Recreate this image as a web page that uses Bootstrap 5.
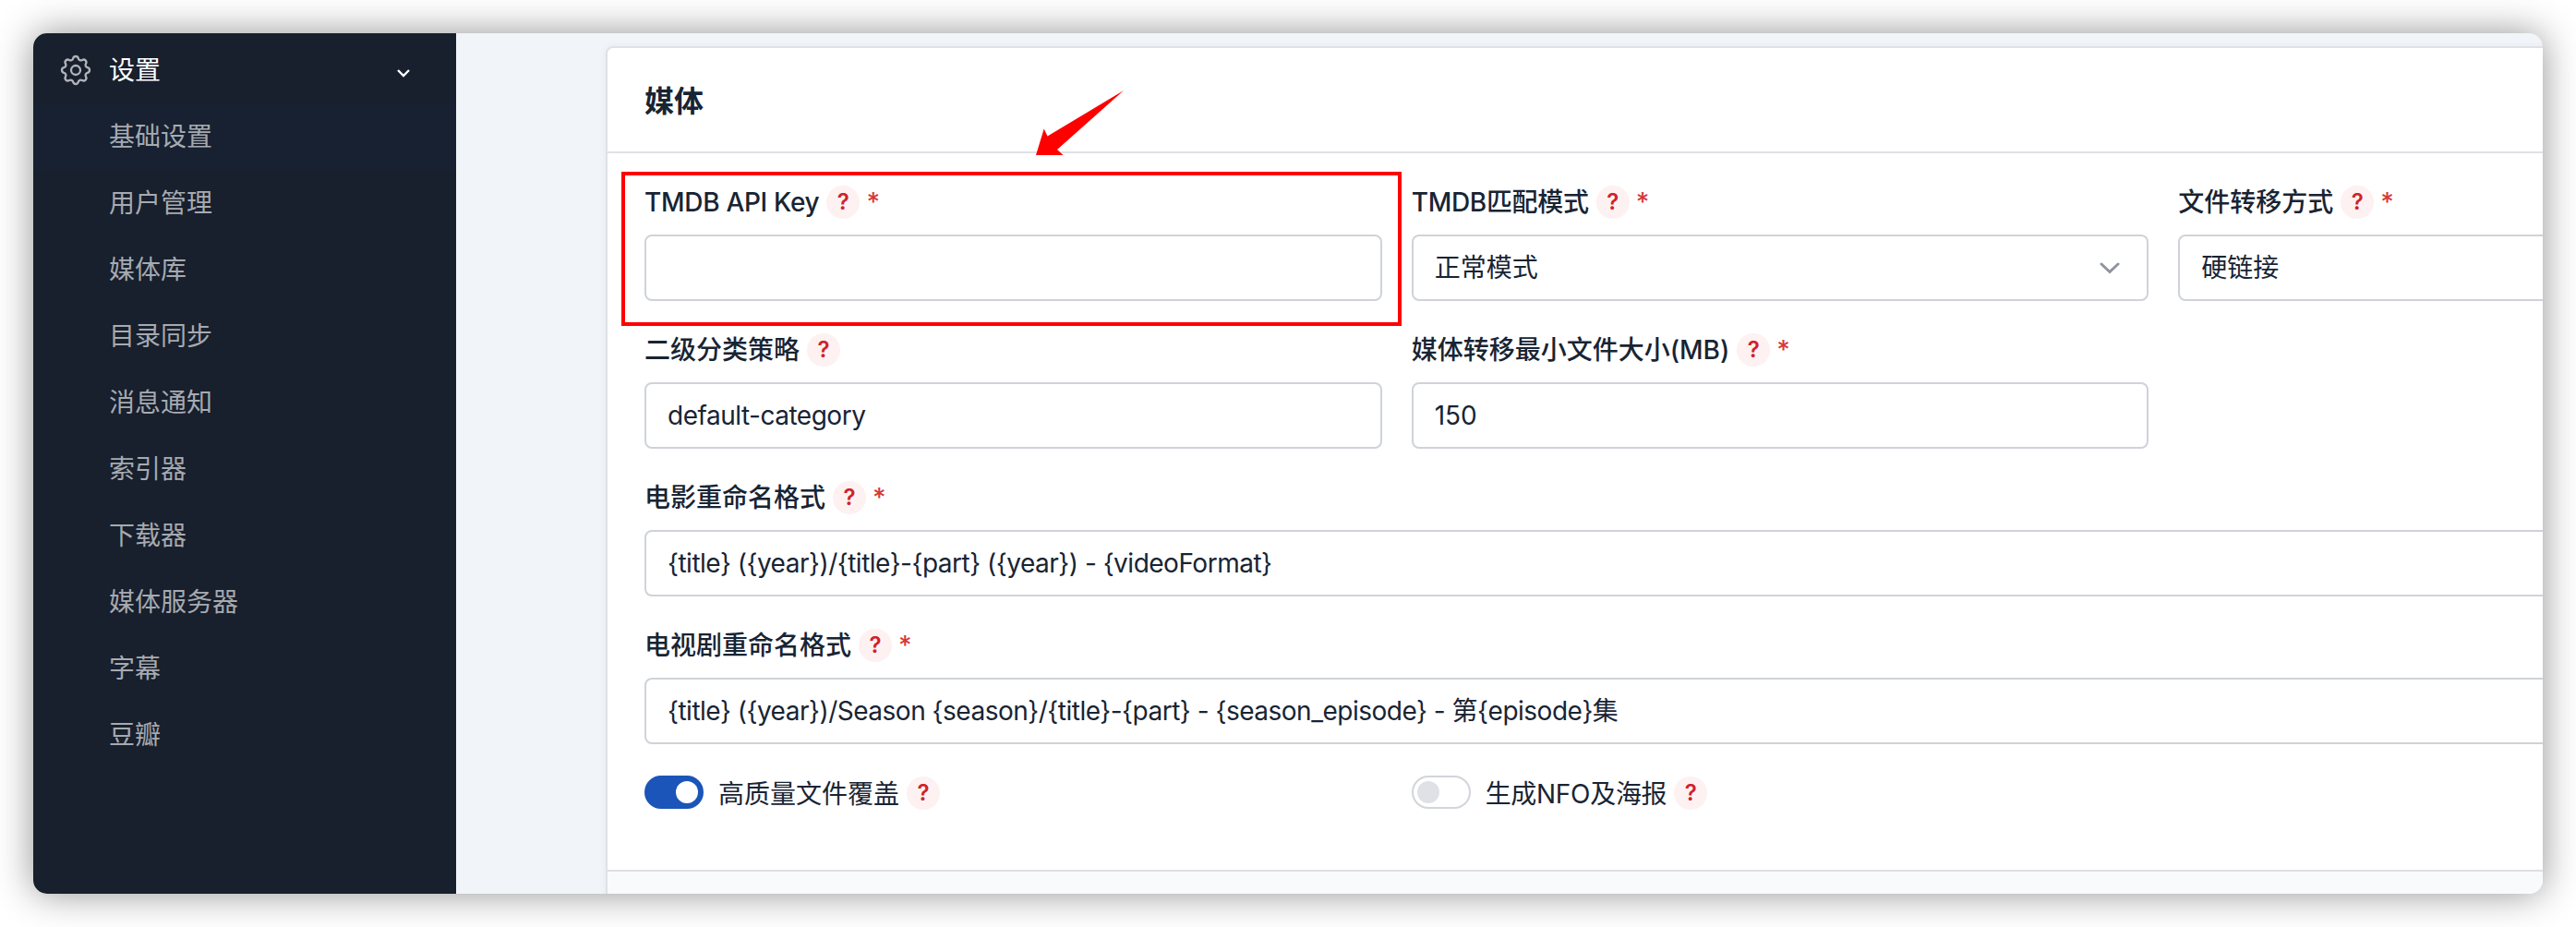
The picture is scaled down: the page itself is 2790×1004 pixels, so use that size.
<!DOCTYPE html>
<html lang="zh-CN">
<head>
<meta charset="utf-8">
<title>设置</title>
<link href="https://cdn.jsdelivr.net/npm/bootstrap@5.3.0/dist/css/bootstrap.min.css" rel="stylesheet">
<style>
body{width:2790px;height:1004px;padding:36px;overflow:hidden;background:#fff;color:#182433;font:400 28px/40px Inter,"Noto Sans CJK SC",sans-serif}
.app-window{height:932px;border-radius:15px;box-shadow:0 0 40px rgba(0,0,0,.43);background:#f1f5f9}
.side-menu{width:458px;background:#181f2d;color:#a6aab0;padding-top:4px}
.menu-row{height:72px;padding-left:82px;line-height:73px}
.menu-head{color:#fff;padding:0 49px 0 26px}
.menu-head .menu-title{margin-left:16px}
.menu-arrow{margin-top:5px}
.menu-row.active{background:#182131}
.main-pane{padding:14px 0 0 162px;min-width:0}
.panel{width:2544px;height:1200px;border:2px solid #dfe1e6;border-radius:8px;background:#fff;box-shadow:0 0 8px rgba(24,36,51,.05)}
.panel-head{height:114px;border-bottom:2px solid #dfe1e6;padding-left:40px;font-size:32px;line-height:115px;font-weight:600}
.panel-main{height:776px;padding:32px 40px 0;width:2540px}
.panel-foot{border-top:2px solid #dcdfe3;background:#f8fafc;height:200px}
.fields{--bs-gutter-x:32px;--bs-gutter-y:0}
.fields>*{height:160px}
.field-label{height:56px;padding-top:1px;font-weight:500}
.help{width:36px;height:36px;border-radius:50%;background:#fdf1f1;color:#d0212b;font:600 24px/36px Inter,sans-serif;text-align:center;margin:2px 0 0 8px;letter-spacing:0}
.req{color:#d63939;margin-left:7px;line-height:41px}
.field-box{height:72px;border:2px solid #cfd3d8;border-radius:8px;padding:0 24px 0 23px;font-size:28px;line-height:69px;white-space:nowrap}
.tight{letter-spacing:-.3px}
.tighter{letter-spacing:-.49px}
.switch-line{padding-top:2px}
.switch-line .help{margin-top:1px}
.toggle{width:64px;height:36px;border-radius:18px;border:2px solid #d2d5da;padding:4px;margin-right:16px}
.toggle i{display:block;width:24px;height:24px;border-radius:50%;background:#dfe1e6}
.toggle.on{background:#1b55b9;border-color:#1b55b9}
.toggle.on i{background:#fff;margin-left:auto}
.mark-box{left:673px;top:186px;width:845px;height:167px;border:4px solid #fe0000}
.mark-arrow{left:1110px;top:90px}
</style>
<script src="https://cdn.jsdelivr.net/npm/bootstrap@5.3.0/dist/js/bootstrap.bundle.min.js"></script>
</head>
<body>
<div class="app-window d-flex overflow-hidden">
  <nav class="side-menu flex-shrink-0">
    <div class="menu-row menu-head d-flex align-items-center">
      <svg width="40" height="40" viewBox="0 0 24 24" fill="none" stroke="#b0b3b9" stroke-width="1.4" stroke-linejoin="round"><path d="M10.325 4.317c.426-1.756 2.924-1.756 3.35 0a1.724 1.724 0 0 0 2.573 1.066c1.543-.94 3.31.826 2.37 2.37a1.724 1.724 0 0 0 1.065 2.572c1.756.426 1.756 2.924 0 3.35a1.724 1.724 0 0 0-1.066 2.573c.94 1.543-.826 3.31-2.37 2.37a1.724 1.724 0 0 0-2.572 1.065c-.426 1.756-2.924 1.756-3.35 0a1.724 1.724 0 0 0-2.573-1.066c-1.543.94-3.31-.826-2.37-2.37a1.724 1.724 0 0 0-1.065-2.572c-1.756-.426-1.756-2.924 0-3.35a1.724 1.724 0 0 0 1.066-2.573c-.94-1.543.826-3.31 2.37-2.37 1 .608 2.296.07 2.572-1.065z"/><circle cx="12" cy="12" r="3"/></svg>
      <span class="menu-title">设置</span>
      <svg class="menu-arrow ms-auto" width="16" height="12" viewBox="0 0 16 12" fill="none" stroke="#fff" stroke-width="2.4"><path d="M2 3l6 6 6-6"/></svg>
    </div>
    <div class="menu-row active">基础设置</div>
    <div class="menu-row">用户管理</div>
    <div class="menu-row">媒体库</div>
    <div class="menu-row">目录同步</div>
    <div class="menu-row">消息通知</div>
    <div class="menu-row">索引器</div>
    <div class="menu-row">下载器</div>
    <div class="menu-row">媒体服务器</div>
    <div class="menu-row">字幕</div>
    <div class="menu-row">豆瓣</div>
  </nav>
  <main class="main-pane flex-grow-1">
    <section class="panel">
      <div class="panel-head">媒体</div>
      <div class="panel-main">
        <div class="row fields">
          <div class="col-4"><div class="field-label tight d-flex">TMDB API Key<span class="help">?</span><span class="req">*</span></div><div class="field-box"></div></div>
          <div class="col-4"><div class="field-label tight d-flex">TMDB匹配模式<span class="help">?</span><span class="req">*</span></div><div class="field-box d-flex align-items-center justify-content-between">正常模式<svg width="32" height="32" viewBox="0 0 32 32" fill="none" stroke="#90949f" stroke-width="3" stroke-linecap="round"><path d="M7 12l9 8.500 9-8.500"/></svg></div></div>
          <div class="col-4"><div class="field-label d-flex">文件转移方式<span class="help">?</span><span class="req">*</span></div><div class="field-box">硬链接</div></div>
          <div class="col-4"><div class="field-label d-flex">二级分类策略<span class="help">?</span></div><div class="field-box tighter">default-category</div></div>
          <div class="col-4"><div class="field-label d-flex">媒体转移最小文件大小(MB)<span class="help">?</span><span class="req">*</span></div><div class="field-box">150</div></div>
          <div class="col-12"><div class="field-label d-flex">电影重命名格式<span class="help">?</span><span class="req">*</span></div><div class="field-box tighter">{title} ({year})/{title}-{part} ({year}) - {videoFormat}</div></div>
          <div class="col-12"><div class="field-label d-flex">电视剧重命名格式<span class="help">?</span><span class="req">*</span></div><div class="field-box tighter">{title} ({year})/Season {season}/{title}-{part} - {season_episode} - 第{episode}集</div></div>
          <div class="col-4 switch-line d-flex"><span class="toggle on"><i></i></span>高质量文件覆盖<span class="help">?</span></div>
          <div class="col-4 switch-line tight d-flex"><span class="toggle"><i></i></span>生成NFO及海报<span class="help">?</span></div>
        </div>
      </div>
      <div class="panel-foot"></div>
    </section>
  </main>
</div>
<div class="mark-box position-absolute"></div>
<svg class="mark-arrow position-absolute" width="120" height="90"><path fill="#fe0000" d="M107 8L35 72 41.500 78H12L20.700 49.500 24.500 57.500Z"/></svg>
</body>
</html>
